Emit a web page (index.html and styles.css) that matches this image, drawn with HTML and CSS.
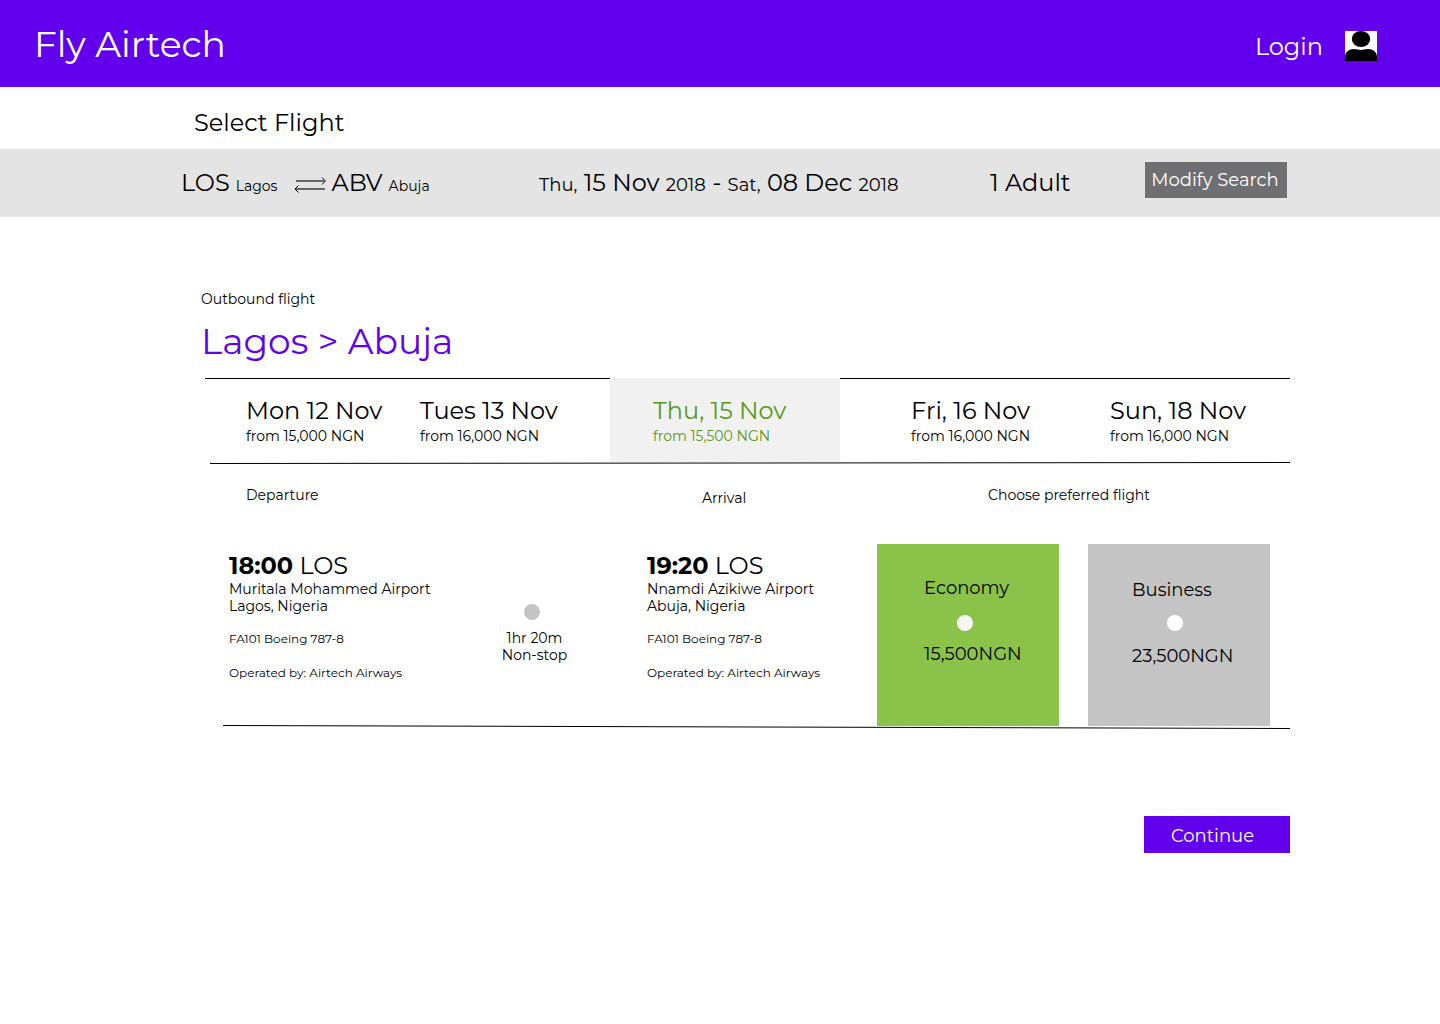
FILE: index.html
```html
<!DOCTYPE html>
<html lang="en">
<head>
<meta charset="utf-8">
<meta name="viewport" content="width=device-width, initial-scale=1">
<title>Fly Airtech – Select Flight</title>
<link rel="stylesheet" href="styles.css">
</head>
<body>
<header class="site-header">
  <a class="brand" href="#">Fly Airtech</a>
  <a class="login" href="#">
    <span class="login-text">Login</span>
    <svg class="avatar" viewBox="0 0 32 30" aria-hidden="true">
      <rect width="32" height="30" fill="#fff"/>
      <ellipse cx="16" cy="8" rx="9.2" ry="8" fill="#000"/>
      <path d="M0 30V26C0 21 4 18 9 18C12 18 13 19 16 19S20 18 23 18C28 18 32 21 32 26V30Z" fill="#000"/>
    </svg>
  </a>
</header>

<h1 class="page-title">Select Flight</h1>

<section class="search-bar" aria-label="Your search">
  <div class="route">
    <span class="code">LOS</span>
    <span class="city">Lagos</span>
    <svg class="swap" viewBox="0 0 32 16" fill="none" stroke="#000" aria-hidden="true">
      <path d="M2 4H30M2 12H31" stroke="#666" stroke-width="2"/>
      <path d="M28 .5L31.500 4L28 7.500M4.500 8.500L1 12L4.500 15.500"/>
    </svg>
    <span class="code">ABV</span>
    <span class="city">Abuja</span>
  </div>
  <div class="dates"><small>Thu,</small> 15 Nov <small>2018</small> - <small>Sat,</small> 08 Dec <small>2018</small></div>
  <div class="travellers">1 Adult</div>
  <button class="modify" type="button">Modify Search</button>
</section>

<main class="content">
  <p class="leg">Outbound flight</p>
  <h2 class="leg-title">Lagos &gt; Abuja</h2>

  <div class="date-strip">
    <button class="date" type="button"><span class="date-day">Mon 12 Nov</span><span>from 15,000 NGN</span></button>
    <button class="date near" type="button"><span class="date-day">Tues 13 Nov</span><span>from 16,000 NGN</span></button>
    <button class="date selected" type="button" aria-pressed="true"><span class="date-day">Thu, 15 Nov</span><span>from 15,500 NGN</span></button>
    <button class="date far" type="button"><span class="date-day">Fri, 16 Nov</span><span>from 16,000 NGN</span></button>
    <button class="date near" type="button"><span class="date-day">Sun, 18 Nov</span><span>from 16,000 NGN</span></button>
  </div>
  <svg class="rule rule-dates" viewBox="0 0 1080 2" preserveAspectRatio="none" aria-hidden="true"><path d="M0 1.500L1080 .5" stroke="#000"/></svg>

  <div class="columns">
    <span>Departure</span>
    <span class="column-arrival">Arrival</span>
    <span>Choose preferred flight</span>
  </div>

  <div class="flight">
    <div class="stop">
      <p class="time"><b>18:00</b> LOS</p>
      <p>Muritala Mohammed Airport<br>Lagos, Nigeria</p>
      <p class="note">FA101 Boeing 787-8</p>
      <p class="note">Operated by: Airtech Airways</p>
    </div>
    <div class="duration">
      <span class="dot"></span>
      <p>1hr 20m<br>Non-stop</p>
    </div>
    <div class="stop arrival">
      <p class="time"><b>19:20</b> LOS</p>
      <p>Nnamdi Azikiwe Airport<br>Abuja, Nigeria</p>
      <p class="note">FA101 Boeing 787-8</p>
      <p class="note">Operated by: Airtech Airways</p>
    </div>
    <div class="fares">
      <label class="fare economy" for="economy">
        <span>Economy</span>
        <input type="radio" name="fare" id="economy">
        <span>15,500NGN</span>
      </label>
      <label class="fare business" for="business">
        <span>Business</span>
        <input type="radio" name="fare" id="business">
        <span>23,500NGN</span>
      </label>
    </div>
  </div>
  <svg class="rule rule-flight" viewBox="0 0 1067 4" preserveAspectRatio="none" aria-hidden="true"><path d="M0 .5L1067 3.500" stroke="#000"/></svg>

  <button class="continue" type="button">Continue</button>
</main>
</body>
</html>
```
FILE: styles.css
```css
* { box-sizing: border-box; }

body {
  margin: 0;
  background: #fff;
  color: #000;
  font-family: Montserrat, Inter, "Open Sans", sans-serif;
  font-size: 14px;
  line-height: 17px;
}

h1, h2, p { margin: 0; font-weight: 400; }
a { color: inherit; text-decoration: none; }
button { border: 0; font: inherit; color: inherit; cursor: pointer; }
svg { display: block; }

.site-header {
  display: flex;
  align-items: center;
  justify-content: space-between;
  height: 87px;
  padding: 4px 63px 0 34px;
  background: #6200ee;
  color: #fff;
}
.brand { padding-bottom: 4px; font-size: 36px; line-height: 44px; }
.login { display: flex; align-items: center; gap: 22px; font-size: 24px; line-height: 29px; }
.login-text { padding-top: 2px; }
.avatar { width: 32px; height: 30px; }

.page-title {
  padding: 21px 194px 12px;
  font-size: 24px;
  line-height: 29px;
}

.search-bar {
  display: grid;
  grid-template-columns: 358fr 451fr 155fr 142px;
  align-items: center;
  padding: 13px 153px 19px 181px;
  background: #e4e4e4;
}
.route { display: flex; align-items: baseline; padding-top: 4px; }
.code, .dates, .travellers { font-size: 24px; line-height: 29px; }
.dates, .travellers { padding-top: 4px; }
.dates small { font-size: 18px; line-height: 18px; }
.city { margin-left: 6px; }
.swap { width: 32px; height: 16px; margin: 6px 5px 0 17px; align-self: center; }
.modify {
  height: 36px;
  padding: 0 2px 0 0;
  background: #6f6f71;
  color: #fff;
  font-size: 18px;
}

.content {
  display: flex;
  flex-direction: column;
  padding: 74px 150px 40px 201px;
}
.leg-title {
  margin-top: 11px;
  color: #6200ee;
  font-size: 36px;
  line-height: 44px;
}

.date-strip {
  display: grid;
  grid-template-columns: 195fr 210fr 230fr 250fr 200fr;
  margin: 15px 0 0 4px;
}
.date {
  display: flex;
  flex-direction: column;
  align-items: flex-start;
  height: 84px;
  padding: 17px 0 0 41px;
  border-top: 1px solid #000;
  background: none;
}
.date-day { margin-bottom: 3px; font-size: 24px; line-height: 29px; }
.date.near { padding-left: 20px; }
.date.far { padding-left: 71px; }
.date.selected { padding-left: 43px; border-top-color: #f1f1f1; background: #f1f1f1; color: #579a1b; }

.rule { display: block; }
.rule-dates { width: calc(100% - 9px); height: 2px; margin-left: 9px; }
.rule-flight { width: calc(100% - 22px); height: 4px; margin-left: 22px; margin-top: -1px; }

.columns {
  display: grid;
  grid-template-columns: 456fr 286fr 302fr;
  margin: 23px 0 37px 45px;
}
.column-arrival { padding-top: 3px; }

.flight {
  display: grid;
  grid-template-columns: 241fr 124fr 283fr 413fr;
  margin-left: 28px;
}
.stop { padding-top: 7px; }
.arrival { padding-left: 53px; }
.time { margin-bottom: 1px; font-size: 24px; line-height: 29px; }
.time b { font-weight: 700; }
.note { margin-top: 16px; font-size: 12px; line-height: 18px; }
.time + p + .note { margin-top: 15px; }
.duration {
  display: flex;
  flex-direction: column;
  align-items: center;
  gap: 10px;
  padding-top: 60px;
  text-align: center;
}
.duration p { padding-left: 5px; }
.dot { width: 16px; height: 16px; border-radius: 50%; background: #c4c4c4; }

.fares { display: grid; grid-template-columns: 1fr 1fr; gap: 29px; padding-right: 20px; }
.fare {
  display: flex;
  flex-direction: column;
  align-items: flex-start;
  height: 182px;
  font-size: 18px;
  line-height: 22px;
  cursor: pointer;
}
.economy { padding: 33px 0 0 47px; background: #8bc34a; }
.business { padding: 35px 0 0 44px; background: #c4c4c4; }
.fare input {
  appearance: none;
  width: 16px;
  height: 16px;
  border-radius: 50%;
  background: #fff;
}
.economy input { margin: 16px 0 12px 33px; background: #faf5f5; }
.business input { margin: 14px 0 14px 35px; }
.fare input:checked { box-shadow: inset 0 0 0 4px #fff, inset 0 0 0 8px #6200ee; }

.continue {
  align-self: flex-end;
  width: 146px;
  height: 37px;
  margin-top: 87px;
  padding: 3px 9px 0 0;
  background: #6200ee;
  color: #fff;
  font-size: 18px;
}
```
